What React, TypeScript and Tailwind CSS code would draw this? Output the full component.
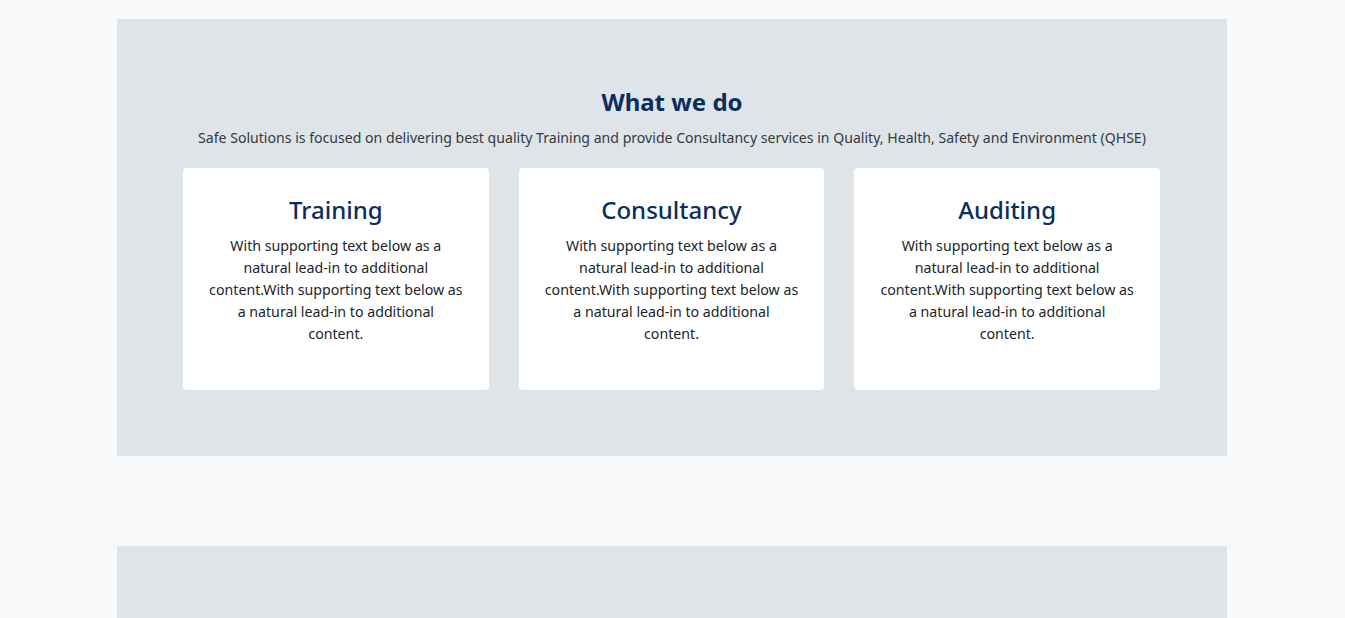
export default function App() {
  const cards = ["Training", "Consultancy", "Auditing"];
  return (
    <div className="min-h-[618px] bg-[#f8f9fa] pt-[19px]" style={{ fontFamily: '"Noto Sans", sans-serif' }}>
      <section className="ml-[117px] w-[1110px] h-[437px] bg-[#dfe4e9] pt-[67px]">
        <h2 className="text-center text-[24px] leading-[32px] font-bold text-[#0b2d5b]">What we do</h2>
        <p className="mt-[9px] text-center text-[14.1px] leading-[22px] text-[#333a40]">
          Safe Solutions is focused on delivering best quality Training and provide Consultancy services in Quality, Health, Safety and Environment (QHSE)
        </p>
        <div className="mt-[19px] ml-[66px] w-[977px] grid grid-cols-3 gap-[30px]">
          {cards.map((c) => (
            <div key={c} className="bg-white rounded-[4px] h-[222px] px-[24px] pt-[26px]">
              <h3 className="text-center text-[24px] leading-[32px] font-medium text-[#0b2d5b]">{c}</h3>
              <p className="mt-[9px] text-center text-[14.2px] leading-[22px] text-[#212529]">
                With supporting text below as a natural lead-in to additional content.With supporting text below as a natural lead-in to additional
                <br />
                content.
              </p>
            </div>
          ))}
        </div>
      </section>
      <div className="h-[90px]" />
      <section className="ml-[117px] w-[1110px] h-[200px] bg-[#dfe4e9]" />
    </div>
  );
}
